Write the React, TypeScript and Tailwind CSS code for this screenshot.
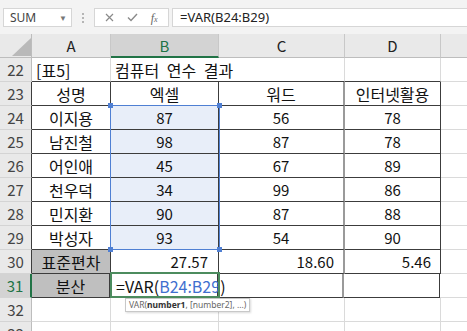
import React from "react";

const rows = [
  { n: "24", name: "이지용", b: "87", c: "56", d: "78" },
  { n: "25", name: "남진철", b: "98", c: "87", d: "78" },
  { n: "26", name: "어인애", b: "45", c: "67", d: "89" },
  { n: "27", name: "천우덕", b: "34", c: "99", d: "86" },
  { n: "28", name: "민지환", b: "90", c: "87", d: "88" },
  { n: "29", name: "박성자", b: "93", c: "54", d: "90" },
];

function RowHead({ n, dark }: { n: string; dark?: boolean }) {
  return (
    <div
      className={`flex w-[32px] shrink-0 items-center justify-center border-b border-r border-b-[#d4d4d4] bg-[#e9e9e9] text-[15px] text-[#444] ${
        dark ? "border-r-[#3c3c3c]" : "border-r-[#bdbdbd]"
      }`}
    >
      {n}
    </div>
  );
}

export default function App() {
  return (
    <div className="relative h-[331px] w-[467px] overflow-hidden bg-white font-['Noto_Sans_CJK_KR',sans-serif] leading-none text-[#111]">
      {/* formula bar */}
      <div className="flex h-[34px] items-start bg-[#f3f3f3] pt-[8px] font-['Noto_Sans',sans-serif]">
        <div className="ml-[3px] flex h-[19px] w-[69px] items-center justify-between border border-[#d6d6d6] bg-white pl-[6px] pr-[4px] text-[12px] text-[#444]">
          <span>SUM</span>
          <span className="text-[8px] text-[#777]">▼</span>
        </div>
        <div className="flex w-[22px] flex-col items-center justify-center gap-[2px] pt-[5px]">
          <span className="h-[2px] w-[2px] bg-[#b5b5b5]" />
          <span className="h-[2px] w-[2px] bg-[#b5b5b5]" />
          <span className="h-[2px] w-[2px] bg-[#b5b5b5]" />
        </div>
        <div className="flex h-[19px] w-[75px] items-center justify-around border border-[#d6d6d6] bg-white px-[4px] text-[#7a7a7a]">
          <svg width="9" height="9" viewBox="0 0 9 9">
            <path d="M1 1L8 8M8 1L1 8" stroke="#8a8a8a" strokeWidth="1.2" fill="none" />
          </svg>
          <svg width="11" height="9" viewBox="0 0 11 9">
            <path d="M1 4.5L4 7.5L10 1" stroke="#8a8a8a" strokeWidth="1.4" fill="none" />
          </svg>
          <span className="font-['Liberation_Serif',serif] text-[12px] italic text-[#666]">
            f<span className="text-[8px]">x</span>
          </span>
        </div>
        <div className="ml-[3px] flex h-[19px] flex-1 items-center border border-r-0 border-[#d6d6d6] bg-white pl-[7px] text-[13px] text-[#222]">
          =VAR(B24:B29)
        </div>
      </div>

      {/* column headers */}
      <div className="flex h-[24px] bg-[#e9e9e9] text-[15px] text-[#222]">
        <div className="relative w-[32px] shrink-0 border-b border-r border-[#bdbdbd]">
          <svg className="absolute left-[12px] top-[4px]" width="19" height="18" viewBox="0 0 19 18">
            <polygon points="0,18 19,18 19,0" fill="#b9b9b9" />
          </svg>
        </div>
        <div className="flex w-[79px] shrink-0 items-center justify-center border-b border-r border-[#c8c8c8] border-b-[#bdbdbd]">A</div>
        <div className="flex w-[108px] shrink-0 items-center justify-center border-b-2 border-r border-b-[#217346] border-r-[#c8c8c8] bg-[#d3d3d3] text-[#217346]">
          B
        </div>
        <div className="flex w-[126px] shrink-0 items-center justify-center border-b border-r border-[#c8c8c8] border-b-[#bdbdbd]">C</div>
        <div className="flex w-[96px] shrink-0 items-center justify-center border-b border-r border-[#c8c8c8] border-b-[#bdbdbd]">D</div>
        <div className="flex-1 border-b border-[#bdbdbd]" />
      </div>

      {/* row 22 */}
      <div className="flex h-[24px] text-[16px]">
        <RowHead n="22" />
        <div className="flex w-[79px] shrink-0 items-center border-b border-r border-b-[#3c3c3c] border-r-[#dadada] pl-[4px]">[표5]</div>
        <div className="relative z-10 flex w-[108px] shrink-0 items-center overflow-visible whitespace-nowrap border-b border-b-[#3c3c3c] pl-[4px] [word-spacing:4px]">
          컴퓨터 연수 결과
        </div>
        <div className="w-[126px] shrink-0 border-b border-r border-b-[#3c3c3c] border-r-[#dadada]" />
        <div className="w-[96px] shrink-0 border-b border-r border-b-[#3c3c3c] border-r-[#dadada]" />
        <div className="flex-1 border-b border-[#dadada]" />
      </div>

      {/* row 23 */}
      <div className="flex h-[24px] text-[16px]">
        <RowHead n="23" dark />
        <div className="flex w-[79px] shrink-0 items-center justify-center border-b border-r border-[#3c3c3c]">성명</div>
        <div className="flex w-[108px] shrink-0 items-center justify-center border-b border-r border-[#3c3c3c]">엑셀</div>
        <div className="flex w-[126px] shrink-0 items-center justify-center border-b border-r-2 border-b-[#3c3c3c] border-r-[#9a9a9a]">워드</div>
        <div className="flex w-[96px] shrink-0 items-center justify-center border-b border-r border-[#3c3c3c]">인터넷활용</div>
        <div className="flex-1 border-b border-[#dadada]" />
      </div>

      {rows.map((r) => (
        <div key={r.n} className="flex h-[24px] text-[15px]">
          <RowHead n={r.n} dark />
          <div className="flex w-[79px] shrink-0 items-center justify-center border-b border-r border-[#3c3c3c] text-[16px]">{r.name}</div>
          <div className="flex w-[108px] shrink-0 items-center justify-center border-b border-r border-[#3c3c3c] bg-[#e8eef9]">{r.b}</div>
          <div className="flex w-[126px] shrink-0 items-center justify-center border-b border-r-2 border-b-[#3c3c3c] border-r-[#9a9a9a]">{r.c}</div>
          <div className="flex w-[96px] shrink-0 items-center justify-center border-b border-r border-[#3c3c3c]">{r.d}</div>
          <div className="flex-1 border-b border-[#dadada]" />
        </div>
      ))}

      {/* row 30 */}
      <div className="flex h-[24px] text-[15px]">
        <RowHead n="30" dark />
        <div className="flex w-[79px] shrink-0 items-center justify-center border-b border-r border-[#3c3c3c] bg-[#bfbfbf] text-[16px]">표준편차</div>
        <div className="flex w-[108px] shrink-0 items-center justify-end border-b border-r border-[#3c3c3c] pr-[10px]">27.57</div>
        <div className="flex w-[126px] shrink-0 items-center justify-end border-b border-r-2 border-b-[#3c3c3c] border-r-[#9a9a9a] pr-[9px]">18.60</div>
        <div className="flex w-[96px] shrink-0 items-center justify-end border-b border-r border-[#3c3c3c] pr-[9px]">5.46</div>
        <div className="flex-1 border-b border-[#dadada]" />
      </div>

      {/* row 31 */}
      <div className="flex h-[24px] text-[15px]">
        <div className="flex w-[32px] shrink-0 items-center justify-center border-b border-r-2 border-b-[#d4d4d4] border-r-[#217346] bg-[#d3d3d3] text-[15px] text-[#217346]">
          31
        </div>
        <div className="flex w-[78px] shrink-0 items-center justify-center border-b border-r border-[#3c3c3c] bg-[#bfbfbf] text-[16px]">분산</div>
        <div className="relative z-10 flex w-[108px] shrink-0 items-center whitespace-nowrap border-b border-r border-[#3c3c3c] pl-[6px] text-[16px]">
          =VAR(<span className="text-[#3f6fcf]">B24:B29</span>)
        </div>
        <div className="w-[126px] shrink-0 border-b border-r-2 border-b-[#3c3c3c] border-r-[#9a9a9a]" />
        <div className="w-[96px] shrink-0 border-b border-r border-[#3c3c3c]" />
        <div className="flex-1 border-b border-[#dadada]" />
      </div>

      {/* rows 32-33 */}
      {["32", "33"].map((n) => (
        <div key={n} className="flex h-[24px] text-[15px]">
          <RowHead n={n} />
          <div className="w-[79px] shrink-0 border-b border-r border-[#dadada]" />
          <div className="w-[108px] shrink-0 border-b border-r border-[#dadada]" />
          <div className="w-[126px] shrink-0 border-b border-r border-[#dadada]" />
          <div className="w-[96px] shrink-0 border-b border-r border-[#dadada]" />
          <div className="flex-1 border-b border-[#dadada]" />
        </div>
      ))}

      {/* range highlight B24:B29 */}
      <div className="pointer-events-none absolute left-[110px] top-[105px] h-[145px] w-[110px] border border-[#4f7fd3]">
        <span className="absolute -left-[3px] -top-[3px] h-[5px] w-[5px] bg-[#4f7fd3]" />
        <span className="absolute -right-[3px] -top-[3px] h-[5px] w-[5px] bg-[#4f7fd3]" />
        <span className="absolute -bottom-[3px] -left-[3px] h-[5px] w-[5px] bg-[#4f7fd3]" />
        <span className="absolute -bottom-[3px] -right-[3px] h-[5px] w-[5px] bg-[#4f7fd3]" />
      </div>

      {/* active cell B31 */}
      <div className="pointer-events-none absolute left-[110px] top-[272px] z-20 h-[26px] w-[110px] border-2 border-[#4c8c5e]" />

      {/* function tooltip */}
      <div className="absolute left-[125px] top-[298px] z-30 flex h-[14px] items-center whitespace-nowrap border border-[#c8c8c8] bg-white px-[3px] font-['Noto_Sans',sans-serif] text-[8.5px] text-[#666] shadow-[1px_1px_2px_rgba(0,0,0,0.15)]">
        VAR(<b className="text-[#333]">number1</b>, [number2], ...)
      </div>
    </div>
  );
}
